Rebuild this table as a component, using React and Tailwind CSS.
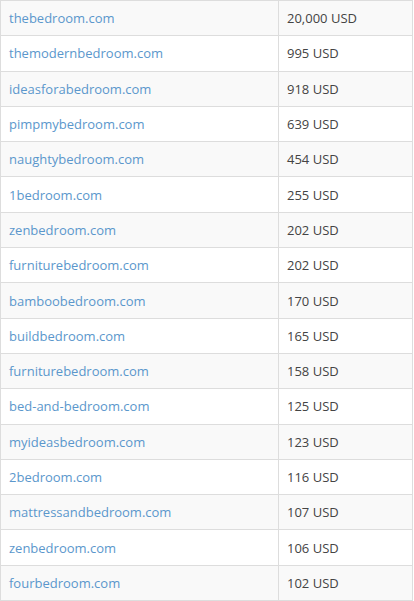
const rows = [
  ['thebedroom.com', '20,000 USD'],
  ['themodernbedroom.com', '995 USD'],
  ['ideasforabedroom.com', '918 USD'],
  ['pimpmybedroom.com', '639 USD'],
  ['naughtybedroom.com', '454 USD'],
  ['1bedroom.com', '255 USD'],
  ['zenbedroom.com', '202 USD'],
  ['furniturebedroom.com', '202 USD'],
  ['bamboobedroom.com', '170 USD'],
  ['buildbedroom.com', '165 USD'],
  ['furniturebedroom.com', '158 USD'],
  ['bed-and-bedroom.com', '125 USD'],
  ['myideasbedroom.com', '123 USD'],
  ['2bedroom.com', '116 USD'],
  ['mattressandbedroom.com', '107 USD'],
  ['zenbedroom.com', '106 USD'],
  ['fourbedroom.com', '102 USD'],
];

export default function App() {
  return (
    <div className="w-[414px] h-[601px] overflow-hidden bg-white font-['Open_Sans',sans-serif] text-[13px]">
      <table className="w-[413px] border-collapse border border-[#ddd]">
        <tbody>
          {rows.map(([domain, price], i) => (
            <tr key={i} className={i % 2 === 0 ? 'bg-[#f9f9f9]' : 'bg-white'}>
              <td className="w-[278px] h-[35.3px] px-2 py-0 border border-[#ddd] align-middle leading-[18px]">
                <a href="#" className="text-[#5b97cc] no-underline">{domain}</a>
              </td>
              <td className="h-[35.3px] px-2 py-0 border border-[#ddd] align-middle leading-[18px] text-[#444]">
                {price}
              </td>
            </tr>
          ))}
        </tbody>
      </table>
    </div>
  );
}
